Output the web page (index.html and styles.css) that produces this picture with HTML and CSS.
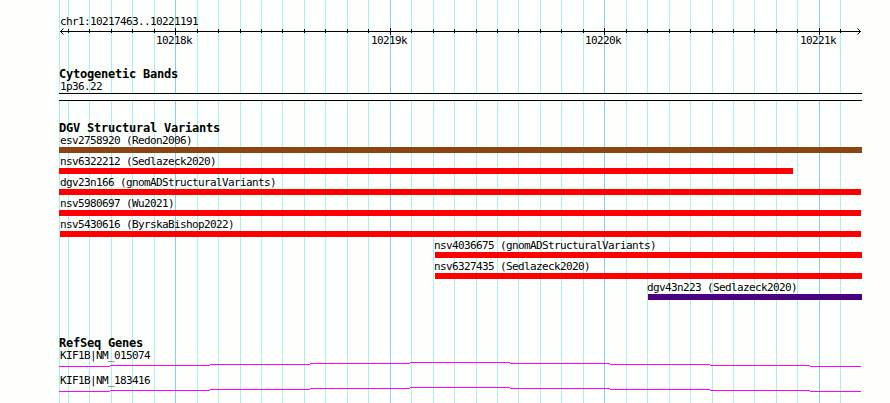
FILE: index.html
```
<!DOCTYPE html>
<html lang="en">
<head>
  <meta charset="UTF-8">
  <title>chr1:10217463..10221191</title>
  <link rel="stylesheet" href="styles.css">
</head>
<body>
  <div class="browser">
    <svg class="gridlines" width="890" height="403" shape-rendering="crispEdges">
      <path class="minor" d="M59.5 0v403M68.5 0v403M89.5 0v403M111.5 0v403M132.5 0v403M154.5 0v403M197.5 0v403M218.5 0v403M240.5 0v403M261.5 0v403M282.5 0v403M304.5 0v403M325.5 0v403M347.5 0v403M368.5 0v403M411.5 0v403M433.5 0v403M454.5 0v403M476.5 0v403M497.5 0v403M518.5 0v403M540.5 0v403M561.5 0v403M583.5 0v403M626.5 0v403M647.5 0v403M669.5 0v403M690.5 0v403M712.5 0v403M733.5 0v403M754.5 0v403M776.5 0v403M797.5 0v403M840.5 0v403"/>
      <path class="major" d="M175.5 0v403M390.5 0v403M604.5 0v403M819.5 0v403"/>
    </svg>

    <div class="panel">
      <div class="scale">
        <div class="label">chr1:10217463..10221191</div>
        <svg class="ruler" width="803" height="19" shape-rendering="crispEdges">
          <path d="M1 3.5h801"/>
          <path d="M9.500 1v4M30.500 1v4M52.500 1v4M73.500 1v4M95.500 1v4M138.500 1v4M159.500 1v4M181.500 1v4M202.500 1v4M223.500 1v4M245.500 1v4M266.500 1v4M288.500 1v4M309.500 1v4M352.500 1v4M374.500 1v4M395.500 1v4M417.500 1v4M438.500 1v4M459.500 1v4M481.500 1v4M502.500 1v4M524.500 1v4M567.500 1v4M588.500 1v4M610.500 1v4M631.500 1v4M653.500 1v4M674.500 1v4M695.500 1v4M717.500 1v4M738.500 1v4M781.500 1v4"/>
          <path d="M116.500 0v7M331.500 0v7M545.500 0v7M760.500 0v7"/>
          <path class="arrow" d="M4.500 .5l-3 3l3 3M798.500 .5l3 3l-3 3"/>
          <text x="97" y="16">10218k</text>
          <text x="312" y="16">10219k</text>
          <text x="526" y="16">10220k</text>
          <text x="741" y="16">10221k</text>
        </svg>
      </div>

      <div class="track cyto">
        <h2>Cytogenetic Bands</h2>
        <div class="label">1p36.22</div>
        <div class="band"></div>
      </div>

      <div class="track variants">
        <h2>DGV Structural Variants</h2>
        <div class="feature">
          <div class="label">esv2758920 (Redon2006)</div>
          <div class="bar complex" style="width: 803px"></div>
        </div>
        <div class="feature">
          <div class="label">nsv6322212 (Sedlazeck2020)</div>
          <div class="bar" style="width: 734px"></div>
        </div>
        <div class="feature">
          <div class="label">dgv23n166 (gnomADStructuralVariants)</div>
          <div class="bar" style="width: 802px"></div>
        </div>
        <div class="feature">
          <div class="label">nsv5980697 (Wu2021)</div>
          <div class="bar" style="width: 802px"></div>
        </div>
        <div class="feature">
          <div class="label">nsv5430616 (ByrskaBishop2022)</div>
          <div class="bar" style="margin-left: 1px; width: 801px"></div>
        </div>
        <div class="feature inner" style="margin-left: 376px">
          <div class="label">nsv4036675 (gnomADStructuralVariants)</div>
          <div class="bar" style="width: 427px"></div>
        </div>
        <div class="feature inner" style="margin-left: 376px">
          <div class="label">nsv6327435 (Sedlazeck2020)</div>
          <div class="bar" style="width: 427px"></div>
        </div>
        <div class="feature inner" style="margin-left: 589px">
          <div class="label">dgv43n223 (Sedlazeck2020)</div>
          <div class="bar inversion" style="width: 214px"></div>
        </div>
      </div>

      <div class="track genes">
        <h2>RefSeq Genes</h2>
        <div class="gene">
          <div class="label">KIF1B|NM_015074</div>
          <svg class="intron" width="803" height="5" shape-rendering="crispEdges">
            <path d="M0 4.500H51M51 3.500H151M151 2.500H251M251 1.500H351M351 .5H451M451 1.500H551M551 2.500H651M651 3.500H751M751 4.500H802"/>
          </svg>
        </div>
        <div class="gene">
          <div class="label">KIF1B|NM_183416</div>
          <svg class="intron" width="803" height="5" shape-rendering="crispEdges">
            <path d="M0 4.500H51M51 3.500H151M151 2.500H251M251 1.500H351M351 .5H451M451 1.500H551M551 2.500H651M651 3.500H751M751 4.500H802"/>
          </svg>
        </div>
      </div>
    </div>
  </div>
</body>
</html>
```
FILE: styles.css
```
body {
  margin: 0;
  background-color: #fdfffc;
  color: #000;
  font-family: 'DejaVu Sans Mono', monospace;
  font-size: 11px;
  overflow: hidden;
}

.browser {
  position: relative;
  width: 890px;
  height: 403px;
  overflow: hidden;
}

/* vertical lines behind all the tracks */
.gridlines {
  position: absolute;
  top: 0;
  left: 0;
}

.gridlines path {
  fill: none;
  stroke-width: 1;
}

.gridlines .minor {
  stroke: #afeeee;
}

.gridlines .major {
  stroke: #87ceeb;
}

.panel {
  position: relative;
  width: 803px;
  padding: 15px 0 0 59px;
}

.panel svg {
  display: block;
}

.label {
  height: 13px;
  line-height: 13px;
  padding-left: 1px;
  letter-spacing: -0.622px;
  white-space: nowrap;
}

h2 {
  margin: 0;
  height: 13px;
  font-size: 12px;
  line-height: 14px;
  font-weight: bold;
  letter-spacing: -0.225px;
}

.ruler path {
  fill: none;
  stroke: #000;
}

.ruler .arrow {
  shape-rendering: auto;
}

.ruler text {
  letter-spacing: -0.622px;
}

.cyto {
  margin-top: 20px;
}

.band {
  box-sizing: border-box;
  height: 8px;
  border-top: 1px solid #000;
  border-bottom: 1px solid #000;
  background-color: #fdfffc;
}

.variants {
  margin-top: 20px;
}

.feature {
  height: 21px;
}

.feature.inner .label {
  padding-left: 0;
  margin-left: -1px;
}

.bar {
  height: 6px;
  background-color: #ff0000;
}

.bar.complex {
  background-color: #8b4513;
}

.bar.inversion {
  background-color: #4b0082;
}

.genes {
  margin-top: 34px;
}

.gene {
  height: 25px;
}

.intron path {
  fill: none;
  stroke: #ff00ff;
}
```
